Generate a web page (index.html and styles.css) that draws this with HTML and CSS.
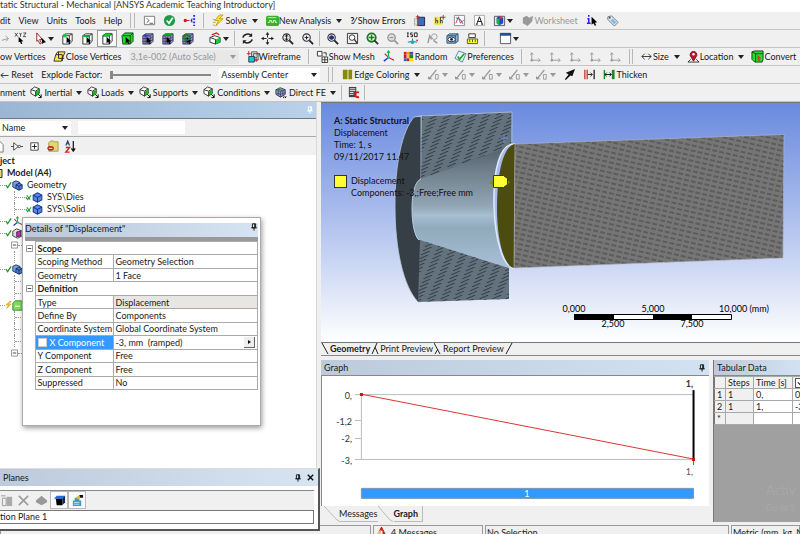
FILE: index.html
```html
<!DOCTYPE html>
<html lang="en">
<head>
    <meta charset="UTF-8">
    <meta name="viewport" content="width=device-width, initial-scale=1.0">
    <title>Static Structural - Mechanical</title>
    <link rel="stylesheet" href="styles.css">
</head>
<body>
    <!-- shared icons -->
    <svg class="defs" aria-hidden="true">
        <symbol id="cube" viewBox="0 0 14 14"><path d="M2 4l3-2h7v8l-3 3H2z" fill="#fff" stroke="#333"/><path d="M2 4h7l3-2M9 4v9" fill="none" stroke="#333"/><path d="M6 5l5 5-2 .3 1 2.2-1.200.5-1-2.300L6 12z"/></symbol>
        <symbol id="cube-point" viewBox="0 0 14 14"><use href="#cube"/><circle cx="4" cy="4" r="2" fill="#0c3"/></symbol>
        <symbol id="cube-edge" viewBox="0 0 14 14"><use href="#cube"/><path d="M2 4l7 1" stroke="#0b2" stroke-width="2"/></symbol>
        <symbol id="cube-face" viewBox="0 0 14 14"><use href="#cube"/><path d="M2 4l3-2.500h7L9 4.500H2z" fill="#0d2" stroke="#063" stroke-width=".6"/></symbol>
        <symbol id="cube-body" viewBox="0 0 14 14"><path d="M1 4l3-3h9v9l-3 3H2z" fill="#0d1d" stroke="#141"/><path d="M2 4h8l3-3M10 4v9" fill="none" stroke="#141"/><path d="M5 5l5 5-2 .3 1 2-1.200.5-1-2L5 12z"/></symbol>
        <symbol id="cube-mesh" viewBox="0 0 14 14"><path d="M2 4l3-2h8v8l-3 3H2z" fill="#99b" stroke="#336"/><path d="M2 7h8l3-2M2 10h8l3-2M4.500 3v10M7.500 3v10M2 4h8l3-2M10 4v9" fill="none" stroke="#336" stroke-width=".8"/><path d="M6 5l5 5-2 .3 1 2-1.200.5-1-2L6 12z"/></symbol>
        <symbol id="mesh-point" viewBox="0 0 14 14"><use href="#cube-mesh"/><circle cx="5" cy="4" r="1.500" fill="#33f"/></symbol>
        <symbol id="mesh-face" viewBox="0 0 14 14"><use href="#cube-mesh"/><path d="M3 3h9" stroke="#0a2" stroke-width="2"/></symbol>
        <symbol id="mesh-body" viewBox="0 0 14 14"><use href="#cube-mesh"/><circle cx="6" cy="6" r="3" fill="none" stroke="#182" stroke-width="1.500"/></symbol>
        <symbol id="load" viewBox="0 0 14 14"><path d="M1 4l4-3 5 2v5l-4 3-5-3z" fill="#fff" stroke="#333"/><path d="M6 6l4-2v4l-4 3z" fill="#1b2"/><path d="M1 4l5 1.500L10 3M6 6v5" fill="none" stroke="#333"/><path d="M9 9l3 3m0-3v3.500H9" fill="none" stroke="#000"/></symbol>
        <symbol id="direct" viewBox="0 0 14 14"><path d="M1 4l5-2 5 2v5l-5 3-5-3z" fill="#99b" stroke="#336"/><path d="M1 4l5 2v6M6 6l5-2M3 3l5 2M3.500 5v5M8.500 5v5M1 7l5 2 5-2" fill="none" stroke="#336" stroke-width=".7"/><path d="M4 2l3 1M1 6l2 1" stroke="#4b4" stroke-width="1.500"/><path d="M9 13l1-2m1 2 1-2" stroke="#000"/></symbol>
        <symbol id="body" viewBox="0 0 14 14"><path d="M1.500 4L7 1l5.500 3v6L7 13 1.500 10z" fill="#5a86ee" stroke="#123a80" stroke-width="1.300"/><path d="M1.500 4L7 7v6M7 7l5.500-3" fill="none" stroke="#123a80" stroke-width="1.300"/></symbol>
        <symbol id="bodies" viewBox="0 0 14 14"><path d="M1 3l4-2 5 2v6l-5 2-4-2z" fill="#7a9cf0" stroke="#124"/><path d="M5 6l4-2 4 2v5l-4 2-4-2z" fill="#4b80e8" stroke="#124"/><path d="M5 6l4 2v5M9 8l4-2" fill="none" stroke="#124"/></symbol>
        <symbol id="coords" viewBox="0 0 14 14"><path d="M7 8V1M5.500 3L7 1l1.500 2" fill="none" stroke="#1b3" stroke-width="1.300"/><path d="M7 8l-5 4" stroke="#23c" stroke-width="1.500"/><path d="M7 8l6 3M3 4l4 4" stroke="#d22" stroke-width="1.300"/><circle cx="7" cy="8" r="1.500" fill="#2bb"/></symbol>
        <symbol id="mag" viewBox="0 0 14 14"><circle cx="6" cy="6" r="4" fill="#eef" stroke="#333" stroke-width="1.200"/><path d="M9 9l4 4" stroke="#222" stroke-width="2"/></symbol>
        <symbol id="axis" viewBox="0 0 14 14"><path d="M3 3v8h9M1.500 5L3 3l1.500 2M10 9l2 2-2 2" fill="none" stroke="#999"/><circle cx="3" cy="11" r="1.300" fill="#999"/></symbol>
        <symbol id="edge" viewBox="0 0 14 14"><path d="M1 12L9 2" stroke="#999" stroke-width="1.500"/><path d="M0 9l5 3H0z" fill="#999"/><path d="M8 7h3v5H8z" fill="none" stroke="#999"/></symbol>
        <symbol id="pin" viewBox="0 0 10 10"><path d="M3 1h4v5H3zM1.500 6h7M5 6v3.500" fill="none" stroke="currentColor" stroke-width="1.200"/><path d="M6 1v5" stroke="currentColor" stroke-width="1.500"/></symbol>
        <symbol id="check" viewBox="0 0 8 8"><path d="M1 4l2 3 4-6" fill="none" stroke="#1a9c2a" stroke-width="1.500"/></symbol>
        <symbol id="cross" viewBox="0 0 8 8"><path d="M1 4l2 3 4-5M2 2l4 5" fill="none" stroke="#1a9c2a" stroke-width="1.200"/></symbol>
        <symbol id="minus" viewBox="0 0 8 8"><path d="M.5.5h7v7h-7z" fill="#fff" stroke="#888"/><path d="M2 4h4" stroke="#333"/></symbol>
        <pattern id="die-hatch" width="13" height="4" patternUnits="userSpaceOnUse" patternTransform="skewX(-24)"><path d="M2 4l7-4" stroke="#27323b" stroke-width="1"/></pattern>
        <pattern id="bar-hatch" width="7" height="5" patternUnits="userSpaceOnUse" patternTransform="rotate(13)"><path d="M0 2h5" stroke="#3c3c3c" stroke-width=".9"/></pattern>
        <linearGradient id="cone" x1="0" y1="0" x2="0" y2="1"><stop offset="0" stop-color="#505b64"/><stop offset=".25" stop-color="#73838f"/><stop offset=".5" stop-color="#90a5b5"/><stop offset=".58" stop-color="#a7bfd2"/><stop offset=".68" stop-color="#90a9bb"/><stop offset="1" stop-color="#a9c0d6"/></linearGradient>
    </svg>

    <header class="titlebar">tatic Structural - Mechanical [ANSYS Academic Teaching Introductory]</header>

    <nav class="toolbar menu">
        <button>dit</button><button>View</button><button>Units</button><button>Tools</button><button>Help</button>
        <span class="sep"></span><span class="grip"></span>
        <button class="icon" aria-label="Console"><svg viewBox="0 0 14 14"><path d="M1.500 2.500h11v9h-11z" fill="#fff" stroke="#777"/><path d="M4 4.500L6.500 7 4 9.500M7 10h4" fill="none" stroke="#555"/></svg></button>
        <button class="icon" aria-label="Check"><svg viewBox="0 0 14 14"><circle cx="7" cy="7" r="6" fill="#1f9a4a"/><path d="M4 7l2.500 3L10.500 4" fill="none" stroke="#fff" stroke-width="1.800"/></svg></button>
        <button class="icon" aria-label="Connections"><svg viewBox="0 0 14 14"><circle cx="2.500" cy="7" r="1.800" fill="#d11"/><path d="M4 7h3" stroke="#d11"/><path d="M8 7l2-3v6z" fill="#22e"/><path d="M12 1v12" stroke="#22e" stroke-width="2" stroke-dasharray="2 1.500"/></svg></button>
        <span class="sep"></span>
        <button><svg viewBox="0 0 14 14"><path d="M8 1L3 7h4l-3 6 8-8H8l4-4z" fill="#fd2" stroke="#a80" stroke-width=".7"/><path d="M1 6h2M1 9h3M1 12h2" stroke="#aa4"/></svg>Solve<i class="arrow"></i></button>
        <button><svg viewBox="0 0 14 14"><rect x="0" y="2" width="14" height="11" rx="2" fill="#3fae2c"/><path d="M2 4h9" stroke="#ceb" /><path d="M2 9h2V7h2v2h2V7h2v2h2" fill="none" stroke="#dfd"/></svg>New Analysis<i class="arrow"></i></button>
        <button class="errors"><b>?⁄</b> Show Errors</button>
        <button class="icon" aria-label="Section"><svg viewBox="0 0 14 14"><path d="M5.500 3.500h7v9h-7z" fill="#336fc4" stroke="#224"/><path d="M1.500 5h4v7h-4z" fill="#ddd" stroke="#777" stroke-dasharray="1 1"/><path d="M5 1v12M3 3h4" stroke="#c22"/></svg></button>
        <button class="icon" aria-label="Annotation"><svg viewBox="0 0 14 14"><path d="M1 3h9v9H1z" fill="#f5e65c"/><path d="M3 4v6M3 7h2v3M8 3v7M8 7h2v3" fill="none" stroke="#443"/><path d="M11 1v5M8.500 3.500h5" stroke="#b22"/></svg></button>
        <button class="icon" aria-label="Chart"><svg viewBox="0 0 14 14"><path d="M1.500 1.500h11v11h-11z" fill="#fff" stroke="#889"/><path d="M3 10l3-7 2 7 4-4" fill="none" stroke="#c33"/><path d="M3 4l5 2 3 5" fill="none" stroke="#36c"/></svg></button>
        <button class="icon" aria-label="Comment"><svg viewBox="0 0 14 14"><path d="M1.500 1.500h11v11h-11z" fill="#fff" stroke="#aaa"/><path d="M4 11l3-8 3 8M3 11h2M9 11h2M5 8h4" fill="none" stroke="#111"/></svg></button>
        <button class="icon" aria-label="Image"><svg viewBox="0 0 14 14"><path d="M1.500 2.500h11v10h-11z" fill="#dde8f8" stroke="#556"/><path d="M4 4l3-2 4 2v6l-4 2-3-2z" fill="#24c"/><path d="M4 4l3 2v6l-3-2z" fill="#1b3"/><path d="M7 2l4 2-4 2z" fill="#e33"/></svg><i class="arrow"></i></button>
        <button disabled><svg viewBox="0 0 14 14"><path d="M2 4l4-2 3 2 4-2-1 6-5 5-5-3z" fill="#999"/></svg>Worksheet</button>
        <button class="icon" aria-label="Info"><svg viewBox="0 0 14 14"><path d="M3 1v2M1.500 5H3v5M1 10h4" fill="none" stroke="#22e" stroke-width="1.600"/><path d="M6 3l6 6-2.500.3L11 12l-1.500.7L8 10l-2 1.500z"/></svg></button>
        <button class="icon" aria-label="Tag"><svg viewBox="0 0 14 14"><path d="M2 3l4-1 7 7-4 4-7-7z" fill="#dce6f2" stroke="#777"/><path d="M7 5l4 4-2 2-4-4z" fill="#6bc0ee"/><circle cx="4" cy="4" r="1" fill="#555"/></svg></button>
    </nav>

    <div class="toolbar picks">
        <button class="icon half" aria-label="Direction" disabled><svg viewBox="0 0 14 14"><path d="M3 9l7-2M7 4l3 3-2 3" fill="none" stroke="#999"/></svg></button>
        <button class="icon" aria-label="Coordinates"><svg viewBox="0 0 14 14"><path d="M1 1l3 4M4 1L1 5M6 1l1 2 1-2M7 3v2M10 1h3l-3 4h3" fill="none" stroke="#222" stroke-width=".8"/><path d="M5 5l5 5-2 .3 1 2.500L7.500 13l-1-2.500L5 11z"/></svg></button>
        <button class="icon wide" aria-label="Select"><svg viewBox="0 0 14 14"><path d="M3 1l6 7H6l2 4-1.500 1L4.500 9 3 10z" fill="#fff" stroke="#822"/><path d="M8 6l5 5-2 .3L9 13z"/></svg><i class="arrow"></i></button>
        <button class="icon" aria-label="Vertex"><svg><use href="#cube-point"/></svg></button>
        <button class="icon" aria-label="Edge"><svg><use href="#cube-edge"/></svg></button>
        <button class="icon pressed" aria-label="Face"><svg><use href="#cube-face"/></svg></button>
        <button class="icon" aria-label="Body"><svg><use href="#cube-body"/></svg></button>
        <button class="icon" aria-label="Node"><svg><use href="#mesh-point"/></svg></button>
        <button class="icon" aria-label="Element face"><svg><use href="#mesh-face"/></svg></button>
        <button class="icon" aria-label="Element"><svg><use href="#mesh-body"/></svg></button>
        <span class="space"></span>
        <button class="icon wide" aria-label="Extend"><svg viewBox="0 0 14 14"><path d="M1 6l5-2 6 2v5l-5 2-6-2z" fill="#fff" stroke="#333"/><path d="M7 8l5-2v5l-5 2z" fill="#1c3"/><path d="M1 6l6 2v5" fill="none" stroke="#333"/><path d="M3 3l5-2 3 2" fill="none" stroke="#c22" stroke-width="1.500"/></svg><i class="arrow"></i></button>
        <span class="sep"></span>
        <button class="icon" aria-label="Rotate"><svg viewBox="0 0 14 14"><path d="M2 6c1-4 7-5 9-2M12 8c-1 4-7 5-9 2" fill="none" stroke="#222" stroke-width="1.600"/><path d="M12 1v4H8zM2 13V9h4z" fill="#222"/></svg></button>
        <button class="icon" aria-label="Pan"><svg viewBox="0 0 14 14"><path d="M7 1v12M1 7h12" stroke="#222" stroke-dasharray="5 2"/><path d="M7 0l2 3H5zM7 14l2-3H5zM0 7l3-2v4zM14 7l-3-2v4z" fill="#222"/></svg></button>
        <button class="icon" aria-label="Zoom"><svg viewBox="0 0 14 14"><use href="#mag"/><path d="M6 3v6M4.500 5L6 3l1.500 2M4.500 7L6 9l1.500-2" fill="none" stroke="#111"/></svg></button>
        <button class="icon" aria-label="Box zoom"><svg viewBox="0 0 14 14"><use href="#mag"/><path d="M6 4v4M4 6h4" stroke="#111"/></svg></button>
        <span class="sep"></span>
        <button class="icon" aria-label="Fit"><svg viewBox="0 0 14 14"><use href="#mag"/><path d="M4 5l2-1 2 1v2L6 8 4 7z" fill="#23a" stroke="#125"/></svg></button>
        <button class="icon" aria-label="Magnifier"><svg viewBox="0 0 14 14"><path d="M1.500 1.500h11v11h-11z" fill="none" stroke="#333"/><circle cx="6.500" cy="6" r="3" fill="#fff" stroke="#333"/><path d="M9 8l3 4" stroke="#333" stroke-width="1.500"/></svg></button>
        <button class="icon" aria-label="Previous view"><svg viewBox="0 0 14 14"><circle cx="6" cy="6" r="4.500" fill="#efe" stroke="#1a7a20" stroke-width="2"/><path d="M3 6h6M6 3v6" stroke="#1a7a20" stroke-width="1.600"/><path d="M9 9l4 4" stroke="#333" stroke-width="2"/></svg></button>
        <button class="icon" aria-label="Next view" disabled><svg viewBox="0 0 14 14"><circle cx="6" cy="6" r="4" fill="#ddd" stroke="#999" stroke-width="1.500"/><path d="M4 6h4" stroke="#888"/><path d="M9 9l4 4" stroke="#999" stroke-width="2"/></svg></button>
        <button class="icon" aria-label="Isometric"><svg viewBox="0 0 14 14"><path d="M1 1h2M2 1v4M1 5h2M7 1H5v2h2v2H5M9 1h3v4H9z" fill="none" stroke="#222"/><path d="M7 7v3l-5 1M7 10l5 1" fill="none" stroke="#26c"/><circle cx="7" cy="11" r="2" fill="#1b9"/><circle cx="12" cy="9" r="1" fill="#d22"/></svg></button>
        <button class="icon" aria-label="Look at" disabled><svg viewBox="0 0 14 14"><path d="M2 12l2-8 2 4" fill="none" stroke="#999" stroke-width="1.500"/><circle cx="9" cy="5" r="3" fill="none" stroke="#999"/><path d="M8 9l4 3" stroke="#999" stroke-width="1.500"/></svg></button>
        <button class="icon" aria-label="Views"><svg viewBox="0 0 14 14"><path d="M1 4l3-2h9v8l-3 2H1z" fill="#8ab2e0" stroke="#356"/><path d="M1 4h9v8M10 4l3-2" fill="none" stroke="#356"/><ellipse cx="6" cy="8" rx="4" ry="2.500" fill="#fff" stroke="#234"/><circle cx="6" cy="8" r="1.500" fill="#124"/></svg></button>
        <button class="icon" aria-label="Ruler"><svg viewBox="0 0 14 14"><path d="M3 2h7v4H3z" fill="#fff" stroke="#333"/><path d="M1.500 7.500h11v5h-11z" fill="#ff4" stroke="#553"/><path d="M4 8v3M7 8v3M10 8v3" stroke="#553"/></svg></button>
        <span class="sep"></span><span class="space"></span>
        <button class="icon wide" aria-label="Viewports"><svg viewBox="0 0 14 14"><path d="M1.500 1.500h11v11h-11z" fill="#fff" stroke="#556"/><path d="M1 2.500h12" stroke="#24508c" stroke-width="3"/></svg><i class="arrow"></i></button>
    </div>

    <div class="toolbar display">
        <button>ow Vertices</button>
        <button><svg viewBox="0 0 14 14"><path d="M5 2h8L9 12H1l2-7z" fill="#fe3" stroke="#333"/><path d="M3 5h7v7M6 2v7h6" fill="none" stroke="#222"/></svg>Close Vertices</button>
        <span class="drop off"><select aria-label="Vertex scale" disabled><option>3,1e-002 (Auto Scale)</option></select></span>
        <button><svg viewBox="0 0 14 14"><path d="M6 2h6v6H6zM8 4h6v6H8z" fill="#ddd" stroke="#333" stroke-width=".8"/><path d="M3 7h6v6H3z" fill="#1cc" stroke="#145"/><path d="M3 1v5M1 4h4M11 9v4M9 11h4" stroke="#b22"/></svg>Wireframe</button>
        <span class="sep"></span>
        <button><svg viewBox="0 0 14 14"><path d="M1.500 1.500h5v5h-5z" fill="#fff" stroke="#333"/><path d="M8 3h3v3" fill="none" stroke="#333"/><path d="M6.500 7.500h6v6h-6zM6.500 10.500h6M9.500 7.500v6" fill="#fff" stroke="#333"/></svg>Show Mesh</button>
        <button class="icon" aria-label="Axes"><svg><use href="#coords"/></svg></button>
        <button><svg viewBox="0 0 14 14"><path d="M2 2h3v3H2z" fill="#e12"/><path d="M5 2h3v3H5z" fill="#f90"/><path d="M8 2h4v3H8z" fill="#63c"/><path d="M2 5h3v4H2z" fill="#c14"/><path d="M5 5h3v4H5z" fill="#ec1"/><path d="M8 5h4v4H8z" fill="#182"/><path d="M2 9h3v3H2z" fill="#26d"/><path d="M5 9h3v3H5z" fill="#b22"/><path d="M8 9h4v3H8z" fill="#fd0"/></svg>Random</button>
        <button><svg viewBox="0 0 14 14"><path d="M5 1l8 3-4 9-8-4z" fill="#e8f2fb" stroke="#58a"/><path d="M4 7l2 3 5-6" fill="none" stroke="#2a2" stroke-width="1.800"/></svg>Preferences</button>
        <span class="sep"></span>
        <button class="icon" aria-label="Axis 1" disabled><svg><use href="#axis"/></svg></button>
        <button class="icon" aria-label="Axis 2" disabled><svg><use href="#axis"/></svg></button>
        <button class="icon" aria-label="Axis 3" disabled><svg><use href="#axis"/></svg></button>
        <button class="icon" aria-label="Axis 4" disabled><svg><use href="#axis"/></svg></button>
        <button class="icon" aria-label="Axis 5" disabled><svg><use href="#axis"/></svg></button>
        <span class="sep"></span><span class="grip"></span>
        <button><svg viewBox="0 0 14 14"><path d="M2 7h10M5 4L2 7l3 3M9 4l3 3-3 3" fill="none" stroke="#333"/></svg>Size<i class="arrow"></i></button>
        <button><svg viewBox="0 0 14 14"><path d="M7 12L3.500 6a3.600 3.600 0 1 1 7 0z" fill="#c8102e" stroke="#711"/><circle cx="7" cy="4.500" r="1.300" fill="#fff"/><path d="M4 10l-3 3h12l-3-3" fill="none" stroke="#333"/></svg>Location<i class="arrow"></i></button>
        <button><svg viewBox="0 0 14 14"><path d="M1 2l3-1h9v9l-1 3H4l-3-3z" fill="#0d1d" stroke="#141"/><path d="M1 2l4 2h8M5 4v9" fill="none" stroke="#141"/><path d="M7 5l4 4-2 .3L10 12l-3-1z" fill="#d33"/></svg>Convert</button>
    </div>

    <div class="toolbar explode">
        <button>← Reset</button>
        <label for="factor">Explode Factor:</label>
        <input id="factor" type="range" min="0" max="10" value="0">
        <span class="drop"><select aria-label="Explode center"><option>Assembly Center</option></select></span>
        <span class="sep"></span><span class="grip"></span>
        <button><svg viewBox="0 0 14 14"><path d="M2 2h5v10H2zM8 2h4v10H8z" fill="#888a00"/></svg>Edge Coloring<i class="arrow"></i></button>
        <button class="icon edge" aria-label="Edges 0" disabled><svg><use href="#edge"/></svg><i class="arrow"></i></button>
        <button class="icon edge" aria-label="Edges 1" disabled><svg><use href="#edge"/></svg><i class="arrow"></i></button>
        <button class="icon edge" aria-label="Edges 2" disabled><svg><use href="#edge"/></svg><i class="arrow"></i></button>
        <button class="icon edge" aria-label="Edges 3" disabled><svg><use href="#edge"/></svg><i class="arrow"></i></button>
        <button class="icon edge" aria-label="Edges x" disabled><svg><use href="#edge"/></svg><i class="arrow"></i></button>
        <button class="icon" aria-label="Arrow"><svg viewBox="0 0 14 14"><path d="M13 1L10 9 8 8l-5 5-1-1 4-5-3-2z" fill="#111"/></svg></button>
        <button class="icon" aria-label="Gap"><svg viewBox="0 0 14 14"><path d="M2 2v10M4.500 2v10" stroke="#c33" stroke-width="1.400"/><path d="M12 2v10" stroke="#222" stroke-width="1.400"/><path d="M5 7h5M8 5l2 2-2 2" fill="none" stroke="#222"/></svg></button>
        <button><svg viewBox="0 0 14 14"><path d="M1.500 2v10" stroke="#1a8a2a" stroke-width="1.500"/><path d="M9.500 2h3v10h-3z" fill="#1a8a2a"/><path d="M2 7h7M4 5L2 7l2 2M7 5l2 2-2 2" fill="none" stroke="#111"/></svg>Thicken</button>
    </div>

    <div class="toolbar loads">
        <button>nment</button>
        <button><svg><use href="#load"/></svg>Inertial<i class="arrow"></i></button>
        <button><svg><use href="#load"/></svg>Loads<i class="arrow"></i></button>
        <button><svg><use href="#load"/></svg>Supports<i class="arrow"></i></button>
        <button><svg><use href="#load"/></svg>Conditions<i class="arrow"></i></button>
        <button><svg><use href="#direct"/></svg>Direct FE<i class="arrow"></i></button>
        <span class="sep"></span>
        <button class="icon" aria-label="Commands"><svg viewBox="0 0 14 14"><path d="M2 1h8v11H2z" fill="#444"/><path d="M3 3h6M3 5h6M3 7h4M3 9h4" stroke="#eee"/><path d="M13 7c-5-2-6 6 0 5" fill="none" stroke="#e11" stroke-width="2"/></svg></button>
        <span class="sep"></span>
    </div>

    <main class="workspace">
        <section class="outline">
            <div class="outline-head"><svg class="pin"><use href="#pin"/></svg></div>
            <div class="filter">
                <span class="drop"><select aria-label="Filter by"><option>Name</option></select></span>
                <input type="text" aria-label="Filter text">
            </div>
            <div class="tree-tools">
                <button aria-label="Page"><svg viewBox="0 0 14 14"><path d="M1 1h7l4 4v8H1" fill="#fff" stroke="#777"/></svg></button>
                <button aria-label="Filter"><svg viewBox="0 0 14 14"><path d="M1 7h3M4 3v8l5-4zM11 7h3" fill="#fff" stroke="#444"/><circle cx="10" cy="7" r="1.300" fill="#fff" stroke="#444"/></svg></button>
                <button aria-label="Expand"><svg viewBox="0 0 14 14"><path d="M3 3h8v8H3z" fill="#fff" stroke="#444"/><path d="M7 4.500v5M4.500 7h5" stroke="#222"/></svg></button>
                <button aria-label="Folder"><svg viewBox="0 0 14 14"><path d="M3 3l2-2h3l1 1h4v10H3z" fill="#e4d86a" stroke="#996"/><ellipse cx="5" cy="9" rx="3.500" ry="2.500" fill="#b22"/><path d="M3 9h4" stroke="#fff"/></svg></button>
                <button aria-label="Sort"><svg viewBox="0 0 14 14"><path d="M2 6l2-5 2 5M3 4h2" fill="none" stroke="#247" stroke-width="1.200"/><path d="M2 8h4l-4 5h4" fill="none" stroke="#c22" stroke-width="1.500"/><path d="M10 1v11M8 9l2 3 2-3" fill="none" stroke="#111" stroke-width="1.300"/></svg></button>
            </div>
            <ul class="tree">
                <li><b>ject</b></li>
                <li class="model"><svg viewBox="0 0 4 10"><path d="M0 1h2v8H0" fill="#e4d86a" stroke="#333"/></svg><b>Model (A4)</b></li>
                <li class="item"><i></i><svg class="mark"><use href="#check"/></svg><svg><use href="#bodies"/></svg>Geometry</li>
                <li class="leaf"><i></i><svg class="mark"><use href="#cross"/></svg><svg><use href="#body"/></svg>SYS\Dies</li>
                <li class="leaf"><i></i><svg class="mark"><use href="#cross"/></svg><svg><use href="#body"/></svg>SYS\Solid</li>
                <li class="item"><i></i><svg class="mark"><use href="#check"/></svg><svg><use href="#coords"/></svg></li>
                <li class="item"><i></i><svg class="mark"><use href="#check"/></svg><svg viewBox="0 0 14 14"><path d="M1 4l5-3 7 3v6l-6 3-6-3z" fill="#ddd" stroke="#222"/><path d="M6 5l5-1v6l-5 1z" fill="#d2c" stroke="#222"/></svg></li>
                <li class="fold"><svg class="mark"><use href="#minus"/></svg><i></i></li>
                <li class="line"></li>
                <li class="item"><i></i><svg class="mark"><use href="#check"/></svg><svg><use href="#bodies"/></svg></li>
                <li class="line branch"><i></i></li>
                <li class="line branch"><i></i></li>
                <li class="item"><i></i><svg class="mark" viewBox="0 0 8 8"><path d="M5 0L1 4h3L2 8l5-5H4l3-3z" fill="#fc2" stroke="#b80" stroke-width=".5"/></svg><svg viewBox="0 0 14 14"><path d="M1 4l3-3h8l1 2v10H1z" fill="#7bdc5c" stroke="#2d7a22"/><path d="M4 8h6" stroke="#fff" stroke-width="1.500"/></svg></li>
                <li class="line branch"><i></i></li>
                <li class="line branch"><i></i></li>
                <li class="line branch"><i></i></li>
                <li class="fold"><svg class="mark"><use href="#minus"/></svg><i></i></li>
            </ul>
        </section>

        <div class="views">
            <section class="viewport">
                <svg viewBox="321 104 479 240" preserveAspectRatio="xMinYMin meet" role="img" aria-label="Model">
                    <path d="M422 117l-8 1C402 132 395 165 395 207c0 42 8 80 23 96h3V117z" fill="#373f46" stroke="#b9cbe2" stroke-width=".8"/>
                    <path d="M421 180c-6 2-9 15-9 30s3 28 7 31l91 28V144z" fill="url(#cone)"/>
                    <path d="M421 180c-6 2-9 15-9 30s3 28 7 31" fill="none" stroke="#b9cfe0"/>
                    <path d="M422 117l90-4-1 34-90 33zM420 241l89 28v31l-91 3z" fill="#64727e"/>
                    <path d="M422 117l90-4-1 34-90 33zM420 241l89 28v31l-91 3z" fill="url(#die-hatch)"/>
                    <path d="M419 117l93-4v30" fill="none" stroke="#a5b7cc"/>
                    <path d="M514 145c-14 0-21 25-20 62 1 34 9 61 20 62z" fill="#a8bbed" stroke="#dfe9ff" stroke-width="1.500"/>
                    <path d="M515 145c-12 2-18 30-18 64 0 33 7 58 17 60z" fill="#4c4b10"/>
                    <path d="M515 145l269-9.500-1 123.500-269 10z" fill="#767676"/>
                    <path d="M515 145l269-9.500-1 123.500-269 10z" fill="url(#bar-hatch)" stroke="#b6bac6" stroke-width=".6"/>
                    <path d="M500 139h8M504 135v9" stroke="#6c8ad0"/>
                    <path d="M489 184l5-3v6zM506 180l4 3-4 4z" fill="#8c8710"/>
                    <path d="M493.500 176.500h10l4 3v6l-4 3h-10z" fill="#ff3" stroke="#333"/>
                    <g class="scale"><path d="M574.500 315.500h157v5h-157z" fill="#fff" stroke="#000"/><path d="M574 315h40v6h-40zM653 315h39v6h-39z"/>
                    <text x="574" y="313">0,000</text><text x="653" y="313">5,000</text><text x="744" y="313">10,000 (mm)</text><text x="613" y="328">2,500</text><text x="692" y="328">7,500</text></g>
                </svg>
                <div class="caption">
                    <b>A: Static Structural</b><span>Displacement</span><span>Time: 1, s</span><span>09/11/2017 11.47</span>
                    <div class="legend"><i></i><span>Displacement<br>Components: -3,;Free;Free mm</span></div>
                </div>
            </section>

            <div class="view-tabs">
                <svg viewBox="0 0 8 12"><path d="M1 0l6 11"/></svg><button class="active">Geometry</button>
                <svg viewBox="0 0 8 12"><path d="M1 11L6 0M4 4l3 7"/></svg><button>Print Preview</button>
                <svg viewBox="0 0 8 12"><path d="M0 0l6 11M1 11l3-5"/></svg><button>Report Preview</button>
                <svg viewBox="0 0 8 12"><path d="M1 11L7 0"/></svg>
            </div>

            <div class="results">
                <section class="graph">
                    <h2 class="panel-head">Graph<svg class="pin"><use href="#pin"/></svg></h2>
                    <svg class="chart" viewBox="0 0 388 130" role="img" aria-label="Displacement over time">
                        <path d="M33 18.500h340M33 44.500h6M33 62.500h6M33 83.500h340M39.500 18v66" fill="none" stroke="#bbb"/>
                        <path d="M39 18l333 65" stroke="#d33"/>
                        <path d="M372.500 83v6" stroke="#d33"/>
                        <path d="M372.500 14v70" stroke="#000" stroke-width="2"/>
                        <path d="M38 17h3v3h-3zM371 82h3v3h-3z" fill="#c11"/>
                        <text x="30" y="23">0,</text><text x="30" y="49">-1,2</text><text x="30" y="66">-2,</text><text x="30" y="88">-3,</text>
                        <text x="372" y="11" class="now">1,</text><text x="372" y="99" class="end">1,</text>
                        <path d="M39.500 112.500h333v10h-333z" fill="#3399ff" stroke="#7796b5"/>
                        <text x="208" y="121" class="step">1</text>
                    </svg>
                    <div class="graph-tabs">
                        <svg viewBox="0 0 16 16"><path d="M1 0l13 14 2 1"/></svg><button>Messages</button>
                        <svg viewBox="0 0 16 16"><path d="M0 0l12 14 3 1.500"/></svg><button class="active">Graph</button>
                    </div>
                </section>
                <section class="tabular">
                    <h2 class="panel-head">Tabular Data</h2>
                    <table>
                        <tr><th></th><th>Steps</th><th>Time [s]</th><th><input type="checkbox" checked aria-label="Displacement X"></th></tr>
                        <tr><th>1</th><td class="gray">1</td><td>0,</td><td>0,</td></tr>
                        <tr><th>2</th><td class="gray">1</td><td>1,</td><td>-3</td></tr>
                        <tr><th>*</th><td class="gray"></td><td></td><td></td></tr>
                    </table>
                    <p class="activate">Activ<small>Go to S</small></p>
                </section>
            </div>
        </div>
    </main>

    <footer class="status">
        <span class="first"></span>
        <span class="messages"><svg viewBox="0 0 14 14"><path d="M7 0l6 12H1z" fill="#e02010" stroke="#921"/><path d="M3 6l3-3v9H1z" fill="#fb5"/><path d="M7 4v5" stroke="#fff" stroke-width="2"/></svg>4 Messages</span>
        <span class="selection">No Selection</span>
        <span class="units">Metric (mm, kg, N)</span>
    </footer>

    <section class="details">
        <h2>Details of "Displacement"<svg class="pin"><use href="#pin"/></svg></h2>
        <table>
            <colgroup><col class="gutter-col"><col class="name-col"><col></colgroup>
            <tr><td class="gutter"><svg><use href="#minus"/></svg></td><th colspan="2">Scope</th></tr>
            <tr><td class="gutter"></td><td>Scoping Method</td><td>Geometry Selection</td></tr>
            <tr><td class="gutter"></td><td>Geometry</td><td>1 Face</td></tr>
            <tr><td class="gutter"><svg><use href="#minus"/></svg></td><th colspan="2">Definition</th></tr>
            <tr><td class="gutter"></td><td>Type</td><td class="fixed">Displacement</td></tr>
            <tr><td class="gutter"></td><td>Define By</td><td>Components</td></tr>
            <tr><td class="gutter"></td><td>Coordinate System</td><td>Global Coordinate System</td></tr>
            <tr><td class="gutter"></td><td class="picked"><label><input type="checkbox">X Component</label></td><td><div class="value">-3, mm&nbsp; (ramped)<button aria-label="Options"></button></div></td></tr>
            <tr><td class="gutter"></td><td>Y Component</td><td>Free</td></tr>
            <tr><td class="gutter"></td><td>Z Component</td><td>Free</td></tr>
            <tr><td class="gutter"></td><td>Suppressed</td><td>No</td></tr>
        </table>
    </section>

    <section class="planes">
        <h2>Planes<svg class="pin"><use href="#pin"/></svg><button aria-label="Close"><svg viewBox="0 0 10 10"><path d="M2 2l6 6M8 2L2 8" stroke="#111" stroke-width="1.600"/></svg></button></h2>
        <div class="planes-tools">
            <button aria-label="New plane" disabled><svg viewBox="0 0 14 14"><path d="M1.500 4.500h4v8h-4z" fill="none" stroke="#999"/><path d="M6 3h6v10H6z" fill="#aaa"/><path d="M0 2h5" stroke="#999"/></svg></button>
            <button aria-label="Delete" disabled><svg viewBox="0 0 14 14"><path d="M2 2l10 10M12 2L2 12" stroke="#999" stroke-width="1.600"/></svg></button>
            <button aria-label="Show elements" disabled><svg viewBox="0 0 14 14"><path d="M7 2l6 5v2l-6 3-6-3V7z" fill="#999"/></svg></button>
            <button class="on" aria-label="Show capping"><svg viewBox="0 0 14 14"><path d="M1 5l3-3h9l-2 3z" fill="#1c6fe0"/><path d="M3 5h7v7H4z"/><path d="M10 5l3-3v7l-3 3z" fill="#0a2a60"/></svg></button>
            <button class="on" aria-label="Edit"><svg viewBox="0 0 14 14"><path d="M2 7h9v6H2zM4 4h5v3H4z" fill="#3a9cc4"/><path d="M3 9h6M3 11h6" stroke="#bfe3f2"/><path d="M5 4l4-3 2 2-3 3z" fill="#f0b428"/><path d="M9 1h4v3h-3z" fill="#111"/></svg></button>
        </div>
        <div class="plane">tion Plane 1</div>
    </section>
</body>
</html>
```

FILE: styles.css
```css
* {
    box-sizing: border-box;
}
body {
    margin: 0;
    height: 100vh;
    overflow: hidden;
    display: flex;
    flex-direction: column;
    position: relative;
    background-color: #f0f0f0;
    color: #1a1a1a;
    font-family: Lato, "Open Sans", sans-serif;
    font-size: 9px;
    line-height: 12px;
}
button, input, select {
    font: inherit;
    color: inherit;
}
button {
    border: none;
    padding: 0;
    background: none;
    white-space: nowrap;
}
h2 {
    margin: 0;
    font-size: 9px;
    font-weight: normal;
}
svg {
    flex: none;
    display: block;
}
.defs {
    position: absolute;
    width: 0;
    height: 0;
}
.titlebar {
    height: 12px;
    flex: none;
    background-color: #fff;
    line-height: 10px;
    white-space: nowrap;
    color: #333;
}

/* toolbars */
.toolbar {
    height: 18px;
    flex: none;
    display: flex;
    align-items: center;
    gap: 8px;
    border-bottom: 1px solid #c4c4c4;
    white-space: nowrap;
    overflow: hidden;
}
.toolbar button {
    display: flex;
    align-items: center;
    flex: none;
}
.toolbar svg {
    width: 13px;
    height: 13px;
}
.toolbar button:disabled {
    color: #999;
}
.toolbar .icon {
    width: 12px;
}
.toolbar .icon:has(.arrow) {
    width: 20px;
}
.arrow {
    border: 3px solid transparent;
    border-top: 4px solid #222;
    border-bottom: none;
    margin-left: 5px;
}
button:disabled .arrow {
    border-top-color: #999;
}
.icon .arrow {
    margin-left: 1px;
}
.sep, .grip {
    flex: none;
    width: 1px;
    height: 15px;
    background-color: #b8b8b8;
}
.sep + .grip {
    margin-left: -5px;
}
.errors {
    gap: 2px;
}
.toolbar.picks {
    gap: 0;
}
.picks .icon {
    width: 20px;
    height: 17px;
    justify-content: center;
}
.picks .half {
    width: 10px;
}
.picks .icon.wide {
    width: 27px;
}
.picks .pressed {
    border: 1px solid #999;
    background-color: #fafafa;
}
.picks .sep {
    margin: 0 2px;
}
.space {
    width: 8px;
}
.toolbar.display {
    gap: 7px;
}
.display .icon {
    width: 13px;
}
.drop {
    position: relative;
    flex: none;
    width: 101px;
    height: 14px;
    background-color: #fff;
}
.drop select {
    appearance: none;
    width: 100%;
    height: 14px;
    border: none;
    padding: 0 2px;
    background: none;
    line-height: 14px;
    opacity: 1;
}
.drop::after {
    content: "";
    position: absolute;
    right: 3px;
    top: 5px;
    border: 3px solid transparent;
    border-top: 4px solid #222;
    border-bottom: none;
}
.off {
    width: 110px;
    background-color: #e8e8e8;
    color: #999;
}
.off::after {
    border-top-color: #999;
}
.explode input {
    appearance: none;
    width: 101px;
    height: 2px;
    margin: 0;
    background-color: #888;
}
.explode input::-webkit-slider-thumb {
    appearance: none;
    width: 3px;
    height: 8px;
    background-color: #888;
}
.edge {
    margin-right: -1px;
}
.toolbar.loads {
    gap: 5px;
}
.loads svg {
    margin-right: 1px;
}
.loads .arrow {
    margin-left: 4px;
}

/* outline */
.workspace {
    flex: 1;
    min-height: 0;
    display: grid;
    grid-template-columns: 317px 1fr;
    gap: 4px;
}
.outline {
    display: flex;
    flex-direction: column;
    border-right: 1px solid #d8d8d8;
    background-color: #fff;
    min-height: 0;
    overflow: hidden;
}
.outline-head {
    height: 17px;
    flex: none;
    display: flex;
    justify-content: flex-end;
    align-items: center;
    padding-right: 2px;
    color: #fff;
    background: linear-gradient(90deg, #9bb6d4, #b9d1ea);
    border-bottom: 1px solid #777;
}
.pin {
    width: 8px;
    height: 8px;
}
.filter {
    height: 18px;
    flex: none;
    display: flex;
    align-items: center;
    gap: 7px;
    background-color: #f0f0f0;
    border-bottom: 1px solid #aaa;
}
.filter .drop {
    width: 71px;
}
.filter input {
    width: 107px;
    height: 13px;
    border: none;
    background-color: #fff;
}
.tree-tools {
    height: 18px;
    flex: none;
    display: flex;
    align-items: center;
    gap: 5px;
    background-color: #f0f0f0;
}
.tree-tools svg {
    width: 13px;
    height: 13px;
}
.tree-tools button:first-child {
    width: 5px;
    display: flex;
    justify-content: flex-end;
}
.tree {
    list-style: none;
    margin: 0;
    padding: 0;
}
.tree li {
    height: 12px;
    display: flex;
    align-items: center;
}
.tree li svg {
    width: 11px;
    height: 11px;
    margin-right: 4px;
}
.tree li .mark {
    width: 7px;
    height: 8px;
    margin-right: 0;
}
.tree i {
    width: 5px;
    border-top: 1px dotted #999;
}
.tree .model svg {
    width: 4px;
    margin-right: 3px;
}
.tree .leaf, .tree .line {
    margin-left: 14px;
    border-left: 1px dotted #999;
}
.tree .leaf i {
    width: 10px;
}
.tree .branch i, .tree .fold i {
    width: 8px;
}
.tree .fold {
    padding-left: 11px;
}

/* model view */
.views {
    min-width: 0;
    min-height: 0;
    display: flex;
    flex-direction: column;
}
.viewport {
    flex: 1;
    min-height: 0;
    position: relative;
    overflow: hidden;
    border-top: 1px solid #777;
    border-bottom: 1px solid #777;
    background: linear-gradient(#6a8adf, #a8bbec 45%, #fff);
}
.viewport > svg {
    width: 100%;
}
.scale text {
    font-size: 9px;
    text-anchor: middle;
}
.caption {
    position: absolute;
    left: 13px;
    top: 12px;
    display: flex;
    flex-direction: column;
    color: #111;
}
.legend {
    display: flex;
    gap: 4px;
    margin-top: 12px;
}
.legend i {
    width: 13px;
    height: 13px;
    background-color: #ff3;
    border: 1px solid #333;
}
.view-tabs {
    height: 13px;
    flex: none;
    display: flex;
    border-bottom: 1px solid #888;
    gap: 1px;
}
.view-tabs svg {
    width: 8px;
    height: 12px;
    fill: none;
    stroke: #222;
}
.active {
    font-weight: bold;
}

/* graph and table */
.results {
    height: 169px;
    flex: none;
    padding-top: 4px;
    display: grid;
    grid-template-columns: 388px 1fr;
    gap: 4px;
}
.panel-head {
    height: 16px;
    display: flex;
    align-items: center;
    justify-content: space-between;
    padding: 0 3px;
    background: linear-gradient(90deg, #bccadb, #d3e2f1);
    border-bottom: 1px solid #888;
}
.graph {
    min-width: 0;
}
.chart {
    width: 100%;
    height: 130px;
    background-color: #fff;
    border-left: 1px solid #888;
}
.chart text {
    font-size: 9px;
    text-anchor: end;
    fill: #333;
}
.chart .now {
    font-weight: bold;
}
.chart .end {
    fill: #555;
}
.chart .step {
    fill: #fff;
}
.graph-tabs {
    display: flex;
    height: 16px;
    padding-left: 2px;
}
.graph-tabs svg {
    width: 16px;
    height: 16px;
    fill: none;
    stroke: #bbb;
}
.graph-tabs button {
    border-bottom: 1px solid #bbb;
}
.graph-tabs .active {
    border-right: 1px solid #bbb;
    padding-right: 4px;
}
.tabular {
    min-width: 0;
    overflow: hidden;
    background-color: #a0a0a0;
    border-left: 1px solid #777;
    position: relative;
    height: 162px;
}
.tabular table {
    border-collapse: collapse;
    table-layout: fixed;
    width: 110px;
    background-color: #fff;
}
.tabular th, .tabular td {
    height: 12px;
    padding: 0 2px;
    border: 1px solid #a8a8a8;
    border-left-color: #777;
    font-weight: normal;
    text-align: left;
    white-space: nowrap;
    line-height: 11px;
}
.tabular th, .tabular .gray {
    background-color: #f0f0f0;
}
.tabular th:nth-child(1) {
    width: 11px;
}
.tabular th:nth-child(2) {
    width: 28px;
}
.tabular th:nth-child(3) {
    width: 39px;
}
.tabular input {
    appearance: none;
    width: 10px;
    height: 10px;
    margin: 0;
    display: block;
    background-color: #fff;
    border: 1px solid #555;
}
.tabular input:checked::after {
    content: "";
    display: block;
    width: 3px;
    height: 5px;
    margin-left: 3px;
    border: solid #111;
    border-width: 0 1px 1px 0;
    transform: rotate(45deg);
}
.activate {
    position: absolute;
    right: 0;
    bottom: 6px;
    width: 34px;
    margin: 0;
    font-size: 13px;
    line-height: 17px;
    color: #a8a8a8;
    white-space: nowrap;
}
.activate small {
    display: block;
    font-size: 9px;
}

/* status bar */
.status {
    height: 9px;
    flex: none;
    display: grid;
    grid-template-columns: 371px 110px 1fr 69px;
    gap: 2px;
    overflow: hidden;
    white-space: nowrap;
}
.status span {
    height: 20px;
    border: 1px solid #999;
    padding: 1px 1px;
    display: flex;
    gap: 3px;
}
.status svg {
    width: 13px;
    height: 13px;
}

/* floating panels */
.details {
    position: absolute;
    left: 22px;
    top: 217px;
    width: 239px;
    height: 209px;
    padding: 5px 2px 2px;
    background-color: #fff;
    border: 1px solid #aaa;
    box-shadow: 1px 2px 5px rgba(0, 0, 0, 0.4);
}
.details h2 {
    height: 18px;
    display: flex;
    justify-content: space-between;
    font-size: 9px;
    line-height: 11px;
    background: linear-gradient(90deg, #b9c8da, #d5e3f2);
    border-bottom: 4px solid #999;
}
.details table {
    width: 100%;
    height: 149px;
    border-collapse: collapse;
    table-layout: fixed;
}
.details td, .details th {
    padding: 0 2px;
    border: 1px solid #aaa;
    line-height: 11px;
    text-align: left;
    white-space: nowrap;
}
.gutter-col {
    width: 10px;
}
.name-col {
    width: 78px;
}
.details .gutter {
    padding: 0 1px;
    border: none;
}
.details .gutter svg {
    width: 7px;
    height: 7px;
}
.details .fixed {
    background-color: #e8e6e2;
}
.details .picked {
    background-color: #3399ff;
    color: #fff;
}
.details label, .value {
    display: flex;
    align-items: center;
    justify-content: space-between;
}
.details label {
    justify-content: flex-start;
    gap: 3px;
}
.details input {
    appearance: none;
    width: 9px;
    height: 9px;
    margin: 0;
    background-color: #fff;
    border: 1px solid #ccc;
}
.value button {
    width: 11px;
    height: 11px;
    background-color: #eee;
    border-right: 1px solid #666;
    border-bottom: 1px solid #666;
}
.value button::after {
    content: "";
    display: block;
    width: 0;
    margin-left: 4px;
    border: 2px solid transparent;
    border-left: 3px solid #111;
    border-right: none;
}
.planes {
    position: absolute;
    left: 0;
    bottom: 3px;
    width: 320px;
    height: 63px;
    background-color: #fff;
    border: 2px solid #555;
    border-top: 1px solid #ddd;
    border-left: none;
}
.planes h2 {
    height: 17px;
    display: flex;
    align-items: center;
    gap: 4px;
    padding: 0 3px;
    background: linear-gradient(90deg, #bccadb, #d7e5f3);
}
.planes h2 .pin {
    margin-left: auto;
}
.planes h2 button svg {
    width: 9px;
    height: 9px;
}
.planes-tools {
    height: 20px;
    margin: 4px 4px 0 0;
    display: flex;
    border-top: 1px solid #888;
    background-color: #f0f0f0;
}
.planes-tools button {
    width: 18px;
    height: 18px;
    display: grid;
    place-items: center;
}
.planes-tools button:first-child {
    width: 14px;
}
.planes-tools .on {
    background-color: #fafafa;
    border: 1px solid #bbb;
}
.planes-tools svg {
    width: 13px;
    height: 13px;
}
.plane {
    height: 14px;
    margin-right: 4px;
    border: 1px solid #777;
    border-left: none;
}
```
